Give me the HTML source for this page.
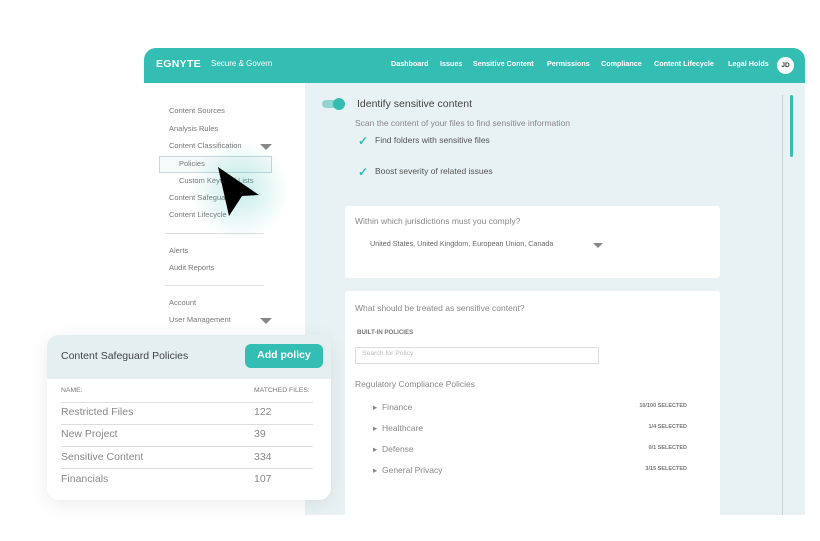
<!DOCTYPE html>
<html><head><style>
*{margin:0;padding:0;box-sizing:border-box}
body{width:820px;height:541px;background:#fff;font-family:"Liberation Sans",sans-serif;position:relative;overflow:hidden;line-height:1.5}
.abs{position:absolute}
.frame{left:144px;top:48px;width:661px;height:467px;border-radius:12px 12px 0 0;overflow:hidden;background:#e8f1f3}
.hdr{left:0;top:0;width:661px;height:35px;background:#33bdb3;color:#fff}
.side{left:0;top:35px;width:161px;height:432px;background:#fff}
.s{position:absolute;font-size:7.5px;color:#777;left:25px}
.card{background:#fff;border-radius:3px}
.g{color:#888}
.nav{position:absolute;top:11px;font-size:7.2px;font-weight:bold}
</style></head><body>
<div class="abs frame">
 <div class="abs hdr">
  <div class="abs" style="left:12px;top:9px;font-size:10.5px;font-weight:bold;letter-spacing:0.3px">EGNYTE</div>
  <div class="abs" style="left:67px;top:10px;font-size:8px">Secure &amp; Govern</div>
  <div class="nav" style="left:247px">Dashboard</div>
  <div class="nav" style="left:296px">Issues</div>
  <div class="nav" style="left:329px">Sensitive Content</div>
  <div class="nav" style="left:403px">Permissions</div>
  <div class="nav" style="left:457px">Compliance</div>
  <div class="nav" style="left:510px">Content Lifecycle</div>
  <div class="nav" style="left:584px">Legal Holds</div>
  <div class="abs" style="left:633px;top:9px;width:17px;height:17px;border-radius:50%;background:#fff;color:#333;font-size:6.5px;font-weight:bold;text-align:center;line-height:17px">JD</div>
 </div>
 <div class="abs side">
  <div class="s" style="top:22px">Content Sources</div>
  <div class="s" style="top:40px">Analysis Rules</div>
  <div class="s" style="top:57px">Content Classification</div>
  <div class="abs" style="left:116px;top:61px;border-left:6px solid transparent;border-right:6px solid transparent;border-top:6px solid #888"></div>
  <div class="abs" style="left:15px;top:73px;width:113px;height:17px;border:1px solid #c8d6da;background:#f5fafa"></div>
  <div class="s" style="top:75px;left:35px">Policies</div>
  <div class="s" style="top:92px;left:35px">Custom Keyword Lists</div>
  <div class="s" style="top:109px">Content Safeguards</div>
  <div class="s" style="top:126px">Content Lifecycle</div>
  <div class="abs" style="left:21px;top:150px;width:99px;height:1px;background:#ddd"></div>
  <div class="s" style="top:162px">Alerts</div>
  <div class="s" style="top:179px">Audit Reports</div>
  <div class="abs" style="left:21px;top:202px;width:99px;height:1px;background:#ddd"></div>
  <div class="s" style="top:214px">Account</div>
  <div class="s" style="top:231px">User Management</div>
  <div class="abs" style="left:116px;top:235px;border-left:6px solid transparent;border-right:6px solid transparent;border-top:6px solid #888"></div>
 </div>
 <div class="abs" style="left:178px;top:52px;width:22px;height:8px;border-radius:4px;background:#8fd6cf"></div>
 <div class="abs" style="left:189px;top:50px;width:12px;height:12px;border-radius:50%;background:#33bdb3"></div>
 <div class="abs" style="left:213px;top:49px;font-size:10.5px;color:#444">Identify sensitive content</div>
 <div class="abs" style="left:211px;top:69px;font-size:8.5px;color:#888">Scan the content of your files to find sensitive information</div>
 <div class="abs" style="left:214px;top:84px;color:#33bdb3;font-size:12px;font-weight:bold">✓</div>
 <div class="abs" style="left:231px;top:86px;font-size:8.5px;color:#555">Find folders with sensitive files</div>
 <div class="abs" style="left:214px;top:115px;color:#33bdb3;font-size:12px;font-weight:bold">✓</div>
 <div class="abs" style="left:231px;top:117px;font-size:8.5px;color:#555">Boost severity of related issues</div>
 <div class="abs" style="left:638px;top:47px;width:1px;height:420px;background:#c9d2d4"></div>
 <div class="abs" style="left:646px;top:47px;width:3px;height:62px;border-radius:2px;background:#33bdb3"></div>
 <div class="abs card" style="left:201px;top:158px;width:375px;height:72px">
  <div class="abs g" style="left:10px;top:9px;font-size:8.5px">Within which jurisdictions must you comply?</div>
  <div class="abs" style="left:25px;top:33px;font-size:7.2px;color:#666">United States, United Kingdom, European Union, Canada</div>
  <div class="abs" style="left:248px;top:37px;border-left:5px solid transparent;border-right:5px solid transparent;border-top:5px solid #888"></div>
 </div>
 <div class="abs card" style="left:201px;top:243px;width:375px;height:240px">
  <div class="abs g" style="left:10px;top:11px;font-size:8.5px">What should be treated as sensitive content?</div>
  <div class="abs" style="left:12px;top:37px;font-size:6.2px;color:#777;font-weight:bold">BUILT-IN POLICIES</div>
  <div class="abs" style="left:10px;top:56px;width:244px;height:17px;border:1px solid #ddd"></div>
  <div class="abs" style="left:17px;top:58px;font-size:6.8px;color:#bbb">Search for Policy</div>
  <div class="abs g" style="left:10px;top:87px;font-size:8.5px">Regulatory Compliance Policies</div>
  <div class="abs g" style="left:28px;top:110px;font-size:8.5px">▸&nbsp; Finance</div>
  <div class="abs g" style="left:28px;top:131px;font-size:8.5px">▸&nbsp; Healthcare</div>
  <div class="abs g" style="left:28px;top:152px;font-size:8.5px">▸&nbsp; Defense</div>
  <div class="abs g" style="left:28px;top:173px;font-size:8.5px">▸&nbsp; General Privacy</div>
  <div class="abs" style="left:282px;top:111px;width:60px;text-align:right;font-size:5.5px;color:#777;font-weight:bold">10/100 SELECTED</div>
  <div class="abs" style="left:282px;top:132px;width:60px;text-align:right;font-size:5.5px;color:#777;font-weight:bold">1/4 SELECTED</div>
  <div class="abs" style="left:282px;top:153px;width:60px;text-align:right;font-size:5.5px;color:#777;font-weight:bold">0/1 SELECTED</div>
  <div class="abs" style="left:282px;top:174px;width:60px;text-align:right;font-size:5.5px;color:#777;font-weight:bold">3/15 SELECTED</div>
 </div>
</div>
<div class="abs" style="left:190px;top:140px;width:100px;height:100px;border-radius:50%;background:radial-gradient(circle,rgba(51,189,179,0.28),rgba(51,189,179,0) 70%)"></div>
<svg class="abs" style="left:210px;top:160px" width="60" height="60"><path d="M8 7 L49 35 L32 36 L19 56 Z" fill="#000"/></svg>
<div class="abs" style="left:47px;top:335px;width:284px;height:165px;border-radius:12px;background:#fff;overflow:hidden;box-shadow:0 4px 20px rgba(0,0,0,0.08)">
 <div class="abs" style="left:0;top:0;width:284px;height:44px;background:#e5eff2"></div>
 <div class="abs" style="left:14px;top:14px;font-size:10.5px;color:#444">Content Safeguard Policies</div>
 <div class="abs" style="left:198px;top:9px;width:78px;height:24px;border-radius:6px;background:#33bdb3;color:#fff;font-size:10.5px;font-weight:bold;text-align:center;line-height:22px">Add policy</div>
 <div class="abs" style="left:14px;top:51px;font-size:6.8px;color:#777">NAME:</div>
 <div class="abs" style="left:207px;top:51px;font-size:6.8px;color:#777">MATCHED FILES:</div>
 <div class="abs" style="left:14px;top:67px;width:252px;height:1px;background:#ddd"></div>
 <div class="abs" style="left:14px;top:70px;font-size:10.5px;color:#888">Restricted Files</div><div class="abs" style="left:207px;top:70px;font-size:10.5px;color:#888">122</div>
 <div class="abs" style="left:14px;top:89px;width:252px;height:1px;background:#ddd"></div>
 <div class="abs" style="left:14px;top:92px;font-size:10.5px;color:#888">New Project</div><div class="abs" style="left:207px;top:92px;font-size:10.5px;color:#888">39</div>
 <div class="abs" style="left:14px;top:111px;width:252px;height:1px;background:#ddd"></div>
 <div class="abs" style="left:14px;top:115px;font-size:10.5px;color:#888">Sensitive Content</div><div class="abs" style="left:207px;top:115px;font-size:10.5px;color:#888">334</div>
 <div class="abs" style="left:14px;top:133px;width:252px;height:1px;background:#ddd"></div>
 <div class="abs" style="left:14px;top:137px;font-size:10.5px;color:#888">Financials</div><div class="abs" style="left:207px;top:137px;font-size:10.5px;color:#888">107</div>
</div>
</body></html>
